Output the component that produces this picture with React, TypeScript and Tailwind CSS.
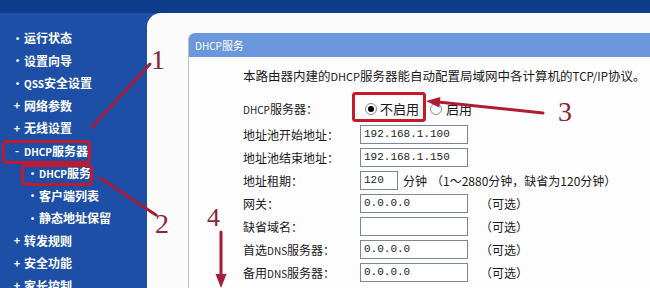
import React from "react";

type SideItem = { mark: string; text: string; sub?: boolean };

const side: SideItem[] = [
  { mark: "•", text: "运行状态" },
  { mark: "•", text: "设置向导" },
  { mark: "•", text: "QSS安全设置" },
  { mark: "+", text: "网络参数" },
  { mark: "+", text: "无线设置" },
  { mark: "-", text: "DHCP服务器" },
  { mark: "•", text: "DHCP服务", sub: true },
  { mark: "•", text: "客户端列表", sub: true },
  { mark: "•", text: "静态地址保留", sub: true },
  { mark: "+", text: "转发规则" },
  { mark: "+", text: "安全功能" },
  { mark: "+", text: "家长控制" },
];

function Mixed({ text, latin }: { text: string; latin: string }) {
  const parts = text.split(/([A-Za-z/]+)/);
  return (
    <>
      {parts.map((p, i) =>
        /^[A-Za-z/]+$/.test(p) ? (
          <span key={i} className={latin}>
            {p}
          </span>
        ) : (
          <React.Fragment key={i}>{p}</React.Fragment>
        )
      )}
    </>
  );
}

function Field({ value, w = "w-[108px]" }: { value: string; w?: string }) {
  return (
    <div
      className={`${w} h-[19px] bg-white border border-[#7d8896] flex items-center pl-[3px] font-['Liberation_Mono',monospace] text-[11px] text-[#222]`}
    >
      {value}
    </div>
  );
}

function Row({ label, children }: { label: string; children: React.ReactNode }) {
  return (
    <div className="h-[23px] flex items-center">
      <div className="w-[117px] shrink-0 text-[12px] text-[#1a1a1a]">
        <Mixed text={label} latin="text-[10px]" />
      </div>
      {children}
    </div>
  );
}

const Opt = () => <span className="ml-[12px] text-[12px] text-[#1a1a1a]">（可选）</span>;

export default function App() {
  return (
    <div className="relative w-[650px] h-[288px] overflow-hidden bg-[#1c4fa5] font-['Noto_Sans_CJK_SC',sans-serif]">
      <div className="h-[13px] bg-[#0f3b8b]" />
      <div className="flex h-[275px]">
        <div className="w-[147px] shrink-0 pt-[14px] text-white text-[12px] font-bold">
          {side.map((it, i) => (
            <div
              key={i}
              className={`h-[22.5px] flex items-center ${it.sub ? "pl-[27px]" : "pl-[12px]"}`}
            >
              <span className="w-[10px] text-center text-[11px] leading-none">{it.mark}</span>
              <span className="ml-[2px]">
                <Mixed text={it.text} latin="text-[10px]" />
              </span>
            </div>
          ))}
        </div>
        <div className="flex-1 bg-[#fbfbfb] rounded-tl-[14px] pl-[41px] pt-[20px]">
          <div className="h-full border-l border-[#bcc2cc] rounded-tl-[6px] bg-[#fdfdfd]">
            <div className="h-[24px] bg-[#6b98dc] rounded-tl-[6px] flex items-center pl-[6px] text-white text-[11px]">
              <Mixed text="DHCP服务" latin="text-[10px]" />
            </div>
            <div className="pl-[54px] pt-[9px]">
              <div className="w-fit h-[20px] flex items-center text-[12.5px] text-[#1a1a1a] whitespace-nowrap">
                <span>
                  本路由器内建的<span className="text-[11px]">DHCP</span>服务器能自动配置局域网中各计算机的
                  <span className="text-[11.5px]">TCP/IP</span>协议。
                </span>
              </div>
              <div className="mt-[8px] h-[29px] flex items-center">
                <div className="w-[117px] shrink-0 text-[12px] text-[#1a1a1a]">
                  <Mixed text="DHCP服务器：" latin="text-[10px]" />
                </div>
                <span className="ml-[5px] w-[12px] h-[12px] rounded-full border border-[#8a8a8a] bg-white flex items-center justify-center">
                  <span className="w-[6px] h-[6px] rounded-full bg-black" />
                </span>
                <span className="ml-[3px] text-[13px] text-[#1a1a1a]">不启用</span>
                <span className="ml-[11px] w-[12px] h-[12px] rounded-full border border-[#8a8a8a] bg-white" />
                <span className="ml-[4px] text-[13px] text-[#1a1a1a]">启用</span>
              </div>
              <Row label="地址池开始地址：">
                <Field value="192.168.1.100" />
              </Row>
              <Row label="地址池结束地址：">
                <Field value="192.168.1.150" />
              </Row>
              <Row label="地址租期：">
                <Field value="120" w="w-[38px]" />
                <span className="ml-[5px] text-[12px] text-[#1a1a1a]">分钟</span>
                <span className="ml-[4px] text-[12px] text-[#1a1a1a] whitespace-nowrap">（1～2880分钟，缺省为120分钟）</span>
              </Row>
              <Row label="网关：">
                <Field value="0.0.0.0" />
                <Opt />
              </Row>
              <Row label="缺省域名：">
                <Field value="" />
                <Opt />
              </Row>
              <Row label="首选DNS服务器：">
                <Field value="0.0.0.0" />
                <Opt />
              </Row>
              <Row label="备用DNS服务器：">
                <Field value="0.0.0.0" />
                <Opt />
              </Row>
            </div>
          </div>
        </div>
      </div>
      <svg className="absolute inset-0 pointer-events-none" width="650" height="288" viewBox="0 0 650 288">
        <rect x="3.5" y="141.5" width="86" height="21" rx="3" fill="none" stroke="#c01a30" strokeWidth="3" />
        <rect x="22.5" y="165.5" width="69" height="19" rx="3" fill="none" stroke="#c01a30" strokeWidth="3" />
        <rect x="353.5" y="93.5" width="71" height="27" rx="2" fill="none" stroke="#c8182c" strokeWidth="3" />
        <line x1="150" y1="64" x2="92" y2="127" stroke="#a51d3a" strokeWidth="3" strokeLinecap="round" />
        <line x1="100" y1="178" x2="156" y2="215" stroke="#a51d3a" strokeWidth="3" strokeLinecap="round" />
        <line x1="543" y1="113" x2="438" y2="102" stroke="#b01c34" strokeWidth="3" strokeLinecap="round" />
        <polygon points="426,101 440.4,97 439.4,107.4" fill="#b01c34" />
        <line x1="221" y1="232" x2="221" y2="276" stroke="#a51d3a" strokeWidth="3" strokeLinecap="round" />
        <polygon points="215.5,274 226.5,274 221,288" fill="#a51d3a" />
        <text x="151" y="69" fontFamily="'Liberation Serif', serif" fontSize="28" fill="#8c2438">1</text>
        <text x="155" y="233" fontFamily="'Liberation Serif', serif" fontSize="28" fill="#8c2438">2</text>
        <text x="558" y="121" fontFamily="'Liberation Serif', serif" fontSize="28" fill="#8c2438">3</text>
        <text x="207" y="226" fontFamily="'Liberation Serif', serif" fontSize="26" fill="#8c2438">4</text>
      </svg>
    </div>
  );
}
